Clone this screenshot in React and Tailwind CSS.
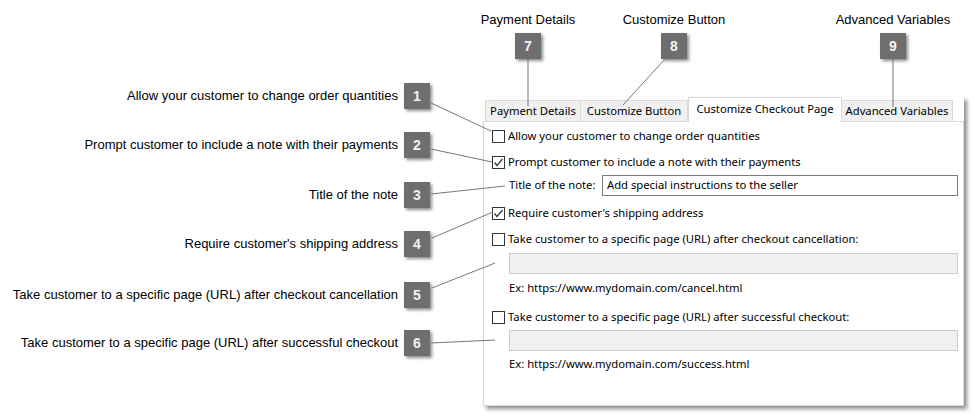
import React from 'react';

const leftCallouts = [
  { n: 1, text: 'Allow your customer to change order quantities', mt: 'mt-[83px]' },
  { n: 2, text: 'Prompt customer to include a note with their payments', mt: 'mt-[23px]' },
  { n: 3, text: 'Title of the note', mt: 'mt-[24px]' },
  { n: 4, text: "Require customer's shipping address", mt: 'mt-[23px]' },
  { n: 5, text: 'Take customer to a specific page (URL) after checkout cancellation', mt: 'mt-[25px]' },
  { n: 6, text: 'Take customer to a specific page (URL) after successful checkout', mt: 'mt-[22px]' },
];

const topCallouts = [
  { n: 7, text: 'Payment Details', ml: 'ml-[36px]' },
  { n: 8, text: 'Customize Button', ml: 'ml-[26px]' },
  { n: 9, text: 'Advanced Variables', ml: 'ml-[99px]' },
];

// connector lines, page coordinates
const lines = [
  [431, 103, 491, 131],
  [431, 149, 492, 162],
  [431, 194, 505, 186],
  [432, 238, 493, 212],
  [432, 288, 495, 263],
  [431, 343, 495, 340],
  [528, 59, 528, 106],
  [665, 59, 623, 105],
  [893, 59, 893, 107],
];

const Badge = ({ n }) => (
  <div className="w-[26px] h-[26px] shrink-0 bg-[#6e6e6e] shadow-[2px_2px_3px_rgba(0,0,0,0.45)] flex items-center justify-center text-[14px] font-bold text-[#f2f2f2] font-['Liberation_Sans',Arial,sans-serif]">
    {n}
  </div>
);

const Checkbox = ({ checked }) => (
  <span className="w-[13px] h-[13px] shrink-0 border border-[#333333] bg-white flex items-center justify-center">
    {checked && (
      <svg width="11" height="11" viewBox="0 0 11 11">
        <polyline points="1.5,5.5 4,8.5 9.5,2" fill="none" stroke="#333333" strokeWidth="1.2" />
      </svg>
    )}
  </span>
);

const CheckRow = ({ checked, label, mt }) => (
  <div className={`flex items-center h-[20px] gap-[3px] ${mt}`}>
    <Checkbox checked={checked} />
    <span>{label}</span>
  </div>
);

export default function App() {
  return (
    <div className="relative w-[975px] h-[416px] bg-white overflow-hidden flex">
      {/* left callouts */}
      <div className="w-[432px] shrink-0 flex flex-col font-['Liberation_Sans',Arial,sans-serif] text-[13px] text-black">
        {leftCallouts.map(c => (
          <div key={c.n} className={`flex items-center justify-end gap-[6px] h-[26px] pr-[2px] ${c.mt}`}>
            <span className="whitespace-nowrap">{c.text}</span>
            <Badge n={c.n} />
          </div>
        ))}
      </div>

      <div className="flex flex-col">
        {/* top callouts */}
        <div className="flex h-[59px] font-['Liberation_Sans',Arial,sans-serif] text-[13px] text-black">
          {topCallouts.map(c => (
            <div key={c.n} className={`w-[120px] flex flex-col items-center pt-[12px] ${c.ml}`}>
              <span className="leading-[15px] whitespace-nowrap">{c.text}</span>
              <div className="mt-[6px]">
                <Badge n={c.n} />
              </div>
            </div>
          ))}
        </div>

        {/* dialog screenshot */}
        <div className="mt-[38px] ml-[51px] w-[481px] h-[309px] bg-white shadow-[3px_3px_4px_rgba(0,0,0,0.45)] flex flex-col font-['Noto_Sans','Open_Sans',sans-serif] text-[11.25px] text-black">
          <div className="flex items-end h-[24px] pl-[2px]">
            <div className="w-[96px] h-[21px] border border-b-0 border-[#d9d9d9] bg-[#f0f0f0] flex items-center justify-center whitespace-nowrap">Payment Details</div>
            <div className="w-[107px] h-[21px] border border-b-0 border-l-0 border-[#d9d9d9] bg-[#f0f0f0] flex items-center justify-center whitespace-nowrap">Customize Button</div>
            <div className="relative z-10 w-[154px] h-[25px] -mb-px border border-b-0 border-[#d9d9d9] bg-white flex items-start pt-[3px] justify-center whitespace-nowrap">Customize Checkout Page</div>
            <div className="w-[111px] h-[21px] border border-b-0 border-l-0 border-[#d9d9d9] bg-[#f0f0f0] flex items-center justify-center whitespace-nowrap">Advanced Variables</div>
          </div>
          <div className="flex-1 border border-[#d9d9d9] pl-[8px] flex flex-col">
            <CheckRow mt="mt-[4px]" label="Allow your customer to change order quantities" />
            <CheckRow mt="mt-[6px]" checked label="Prompt customer to include a note with their payments" />
            <div className="flex items-center h-[21px] mt-[3px] pl-[17px]">
              <span className="w-[93px]">Title of the note:</span>
              <div className="w-[356px] h-[21px] border border-[#7a7a7a] flex items-center pl-[4px]">Add special instructions to the seller</div>
            </div>
            <CheckRow mt="mt-[7px]" checked label="Require customer's shipping address" />
            <CheckRow mt="mt-[6px]" label="Take customer to a specific page (URL) after checkout cancellation:" />
            <div className="ml-[17px] mt-[4px] w-[449px] h-[21px] border border-[#cccccc] bg-[#f0f0f0]" />
            <div className="ml-[17px] mt-[4px] h-[20px] flex items-center">Ex: https://www.mydomain.com/cancel.html</div>
            <CheckRow mt="mt-[9px]" label="Take customer to a specific page (URL) after successful checkout:" />
            <div className="ml-[17px] mt-[3px] w-[449px] h-[21px] border border-[#cccccc] bg-[#f0f0f0]" />
            <div className="ml-[17px] mt-[3px] h-[20px] flex items-center">Ex: https://www.mydomain.com/success.html</div>
          </div>
        </div>
      </div>

      {/* callout connector lines */}
      <svg className="absolute inset-0 pointer-events-none z-20" width="975" height="416">
        {lines.map((l, i) => (
          <line key={i} x1={l[0]} y1={l[1]} x2={l[2]} y2={l[3]} stroke="#777777" strokeWidth="1" />
        ))}
      </svg>
    </div>
  );
}
